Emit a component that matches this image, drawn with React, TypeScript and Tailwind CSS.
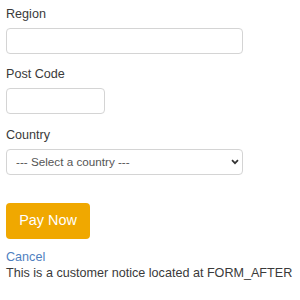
import React from "react";

export default function App() {
  return (
    <div className="w-[300px] h-[300px] bg-white pl-[6px] pt-[5px] text-[#3a3a3a] text-[12.6px]" style={{ fontFamily: '"Liberation Sans", Arial, sans-serif' }}>
      <div className="leading-[18px] mb-[5px]">Region</div>
      <input type="text" className="block w-[237px] h-[26px] border border-[#d4d4d4] rounded-[4px] bg-white mb-[11px]" />
      <div className="leading-[18px] mb-[5px]">Post Code</div>
      <input type="text" className="block w-[99px] h-[26px] border border-[#d4d4d4] rounded-[4px] bg-white mb-[12px]" />
      <div className="leading-[18px] mb-[5px]">Country</div>
      <div className="relative w-[237px] h-[26px]">
        <select className="appearance-none block w-full h-full border border-[#d4d4d4] rounded-[4px] bg-white pl-[9px] text-[11.7px] text-[#555]" style={{ fontFamily: '"Liberation Sans", Arial, sans-serif' }} defaultValue="">
          <option value="">--- Select a country ---</option>
        </select>
        <svg className="absolute right-[4px] top-[10px] pointer-events-none" width="8" height="6" viewBox="0 0 8 6">
          <path d="M1 1.2 L4 4.2 L7 1.2" fill="none" stroke="#333" strokeWidth="1.7" />
        </svg>
      </div>
      <button className="mt-[28px] w-[84px] h-[36px] rounded-[4px] bg-[#f0a800] text-white text-[14.4px] flex items-center justify-center">Pay Now</button>
      <div className="mt-[9.5px] leading-[16.5px] text-[#4f7fbf]">Cancel</div>
      <div className="leading-[16.5px]">This is a customer notice located at FORM_AFTER</div>
    </div>
  );
}
